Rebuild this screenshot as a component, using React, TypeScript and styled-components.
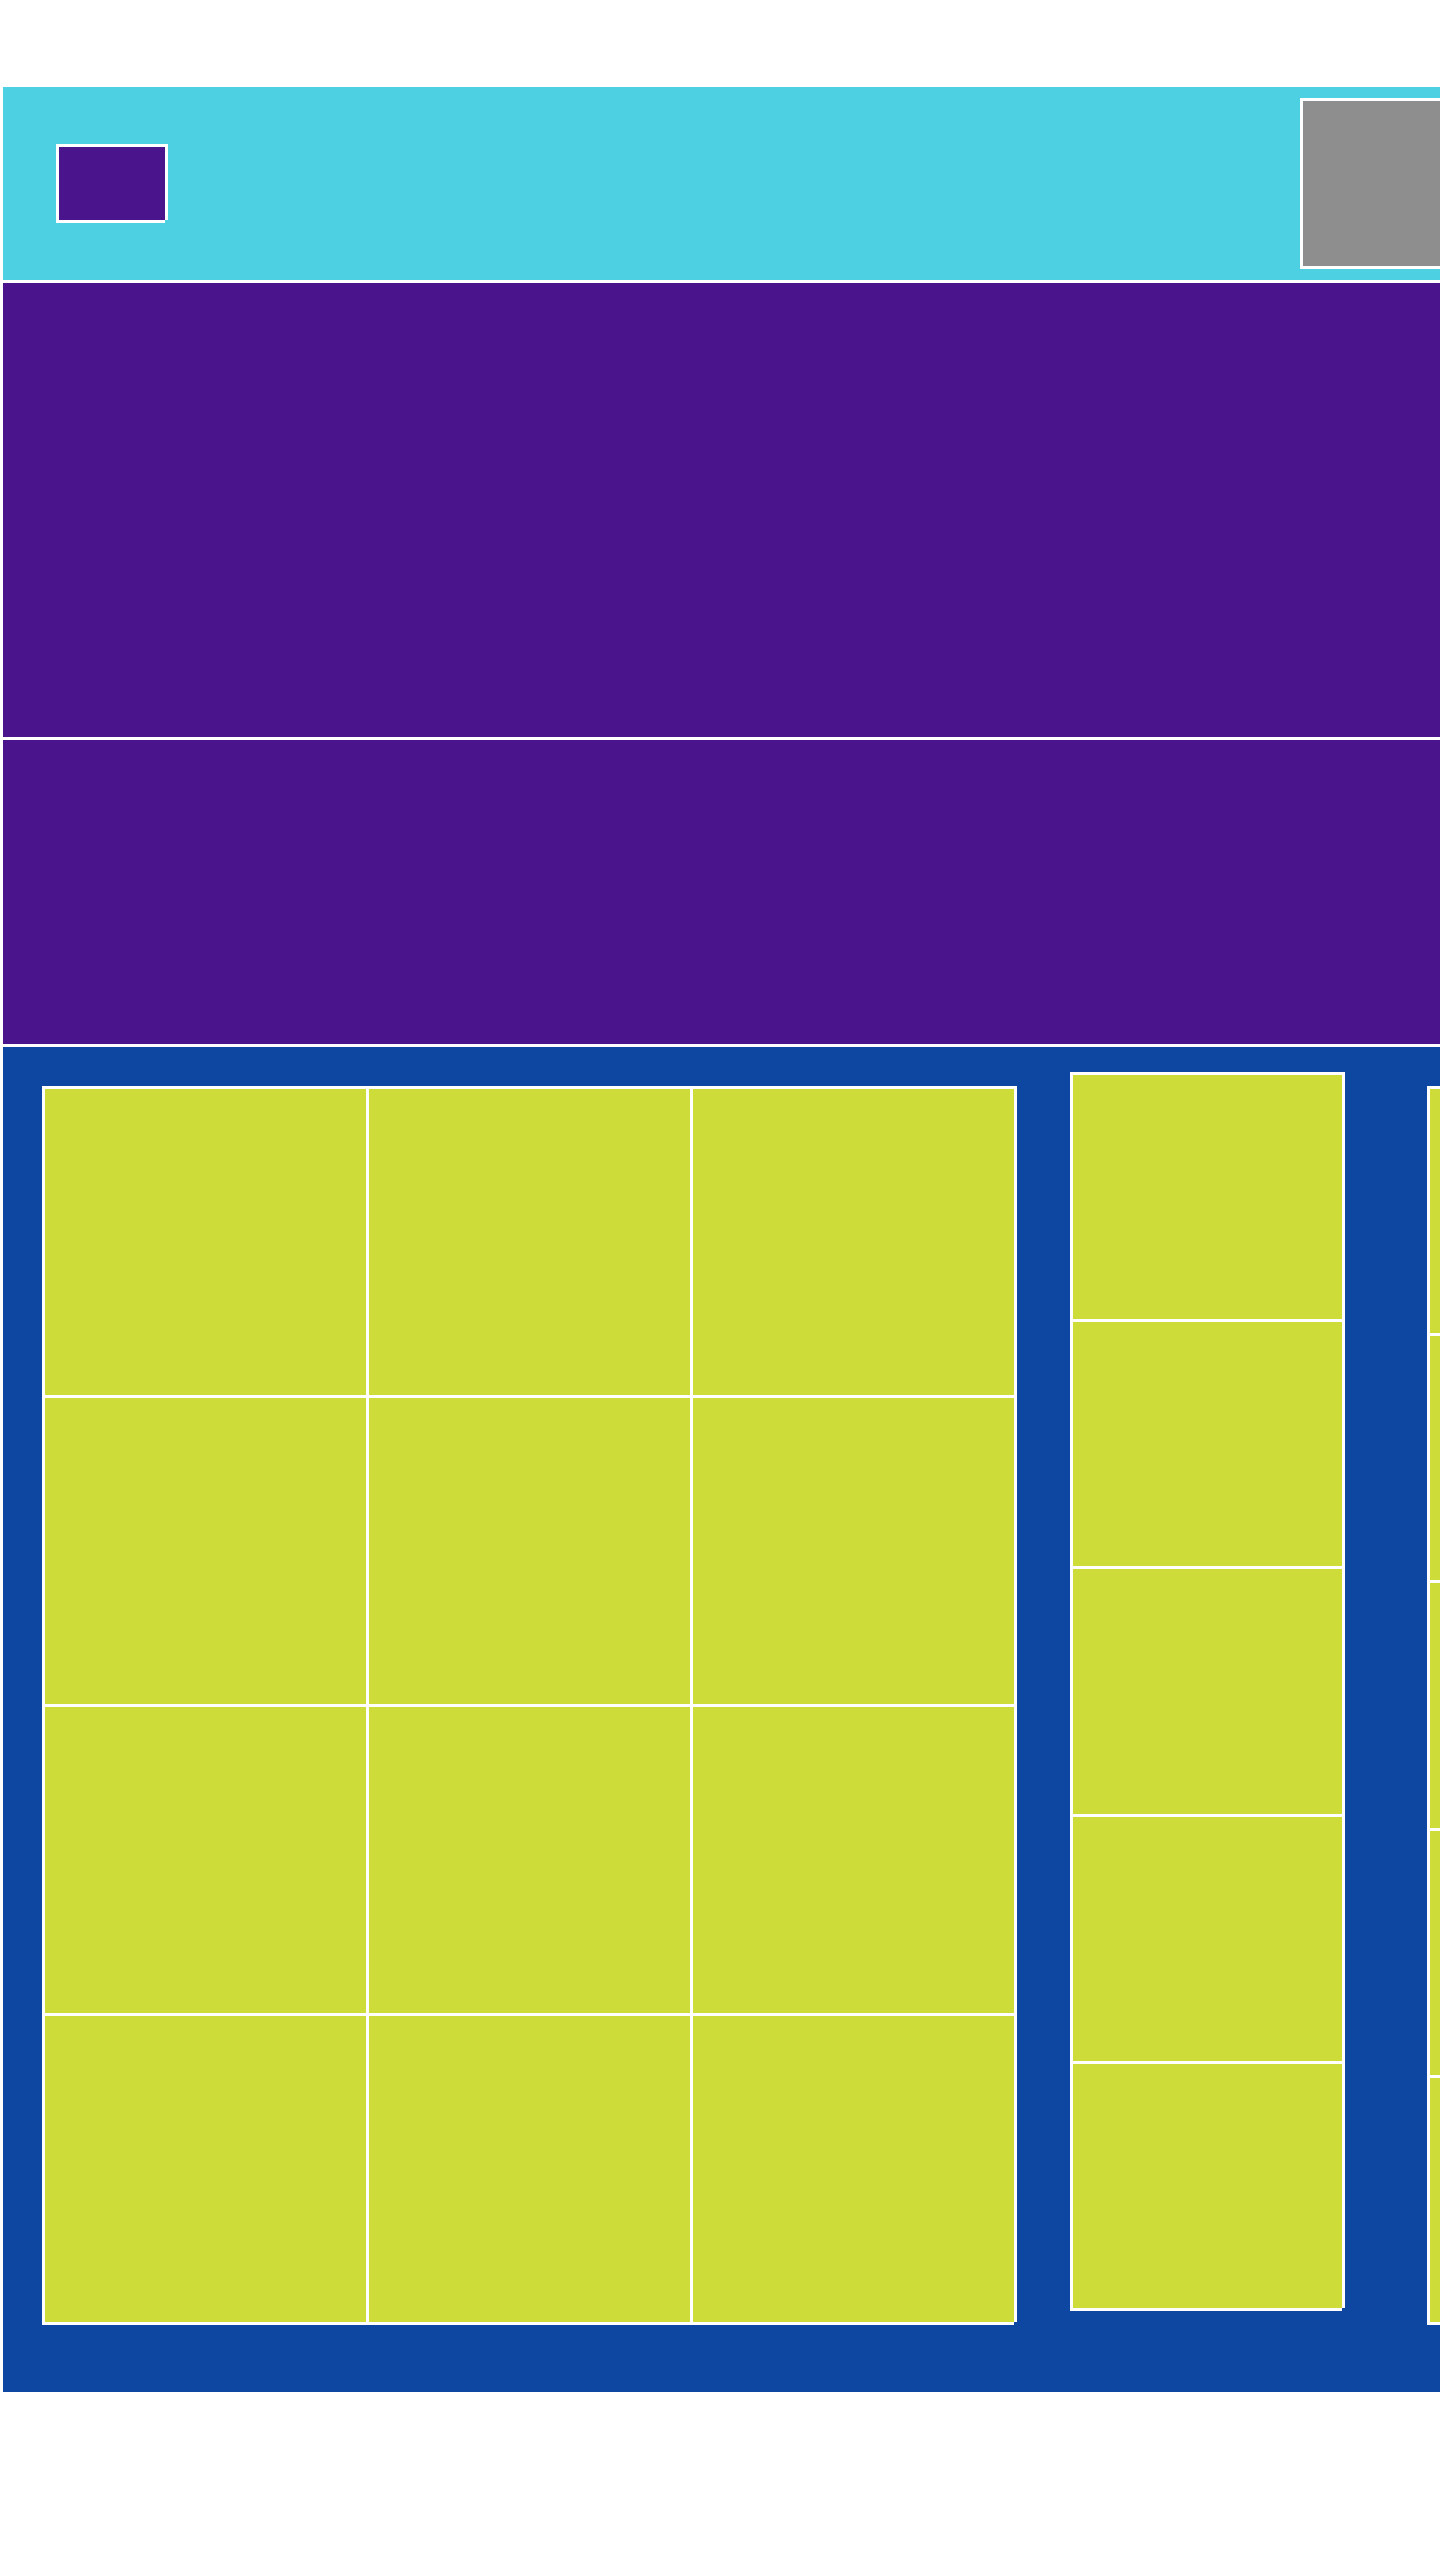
import React from 'react';
import styled, { createGlobalStyle, css } from 'styled-components';

const GlobalStyle = createGlobalStyle`
  html, body {
    margin: 0;
    padding: 0;
    background: #ffffff;
    overflow-x: hidden;
    font-family: 'Liberation Sans', Arial, sans-serif;
  }
`;

// wireframe stroke: 3px white on every side, bottom-right corner left open
const frame = css`
  box-shadow:
    -3px -3px 0 #ffffff,
    3px -3px 0 #ffffff,
    3px 0 0 #ffffff,
    -3px 3px 0 #ffffff,
    0 3px 0 #ffffff;
`;

const Page = styled.div`
  display: flex;
  flex-direction: column;
  gap: 3px;
  width: 1800px;
  padding: 87px 0 0 3px;
`;

const Header = styled.header`
  display: flex;
  align-items: center;
  height: 193px;
  padding-left: 56px;
  background: #4dd0e1;
`;

const Logo = styled.div`
  ${frame};
  width: 106px;
  height: 73px;
  background: #4a148c;
`;

const Avatar = styled.div`
  ${frame};
  width: 300px;
  height: 165px;
  margin-left: 1138px;
  background: #8e8e8e;
`;

const Banner = styled.section<{ tall?: boolean }>`
  height: ${(p) => (p.tall ? '454px' : '304px')};
  background: #4a148c;
`;

const Board = styled.main`
  display: flex;
  align-items: flex-start;
  height: 1345px;
  box-sizing: border-box;
  padding: 25px 0 0 39px;
  background: #0d47a1;
`;

const Grid = styled.div`
  display: grid;
  grid-template-columns: repeat(3, 321px);
  grid-auto-rows: 306px;
  gap: 3px;
  padding: 3px;
  margin-top: 14px;
`;

const Column = styled.div<{ offset?: number }>`
  display: flex;
  flex-direction: column;
  gap: 3px;
  width: 269px;
  height: 1233px;
  padding: 3px;
  margin-top: ${(p) => p.offset ?? 0}px;
  margin-left: ${(p) => (p.offset ? 82 : 53)}px;
`;

const Tile = styled.div`
  ${frame};
  flex: 1;
  background: #cddc39;
`;

const App: React.FC = () => {
  const gridCells = Array.from({ length: 12 }, (_, i) => i);
  const stack = Array.from({ length: 5 }, (_, i) => i);

  return (
    <>
      <GlobalStyle />
      <Page>
        <Header>
          <Logo />
          <Avatar />
        </Header>

        <Banner tall />
        <Banner />

        <Board>
          <Grid>
            {gridCells.map((i) => (
              <Tile key={i} />
            ))}
          </Grid>

          <Column>
            {stack.map((i) => (
              <Tile key={i} />
            ))}
          </Column>

          <Column offset={14}>
            {stack.map((i) => (
              <Tile key={i} />
            ))}
          </Column>
        </Board>
      </Page>
    </>
  );
};

export default App;
